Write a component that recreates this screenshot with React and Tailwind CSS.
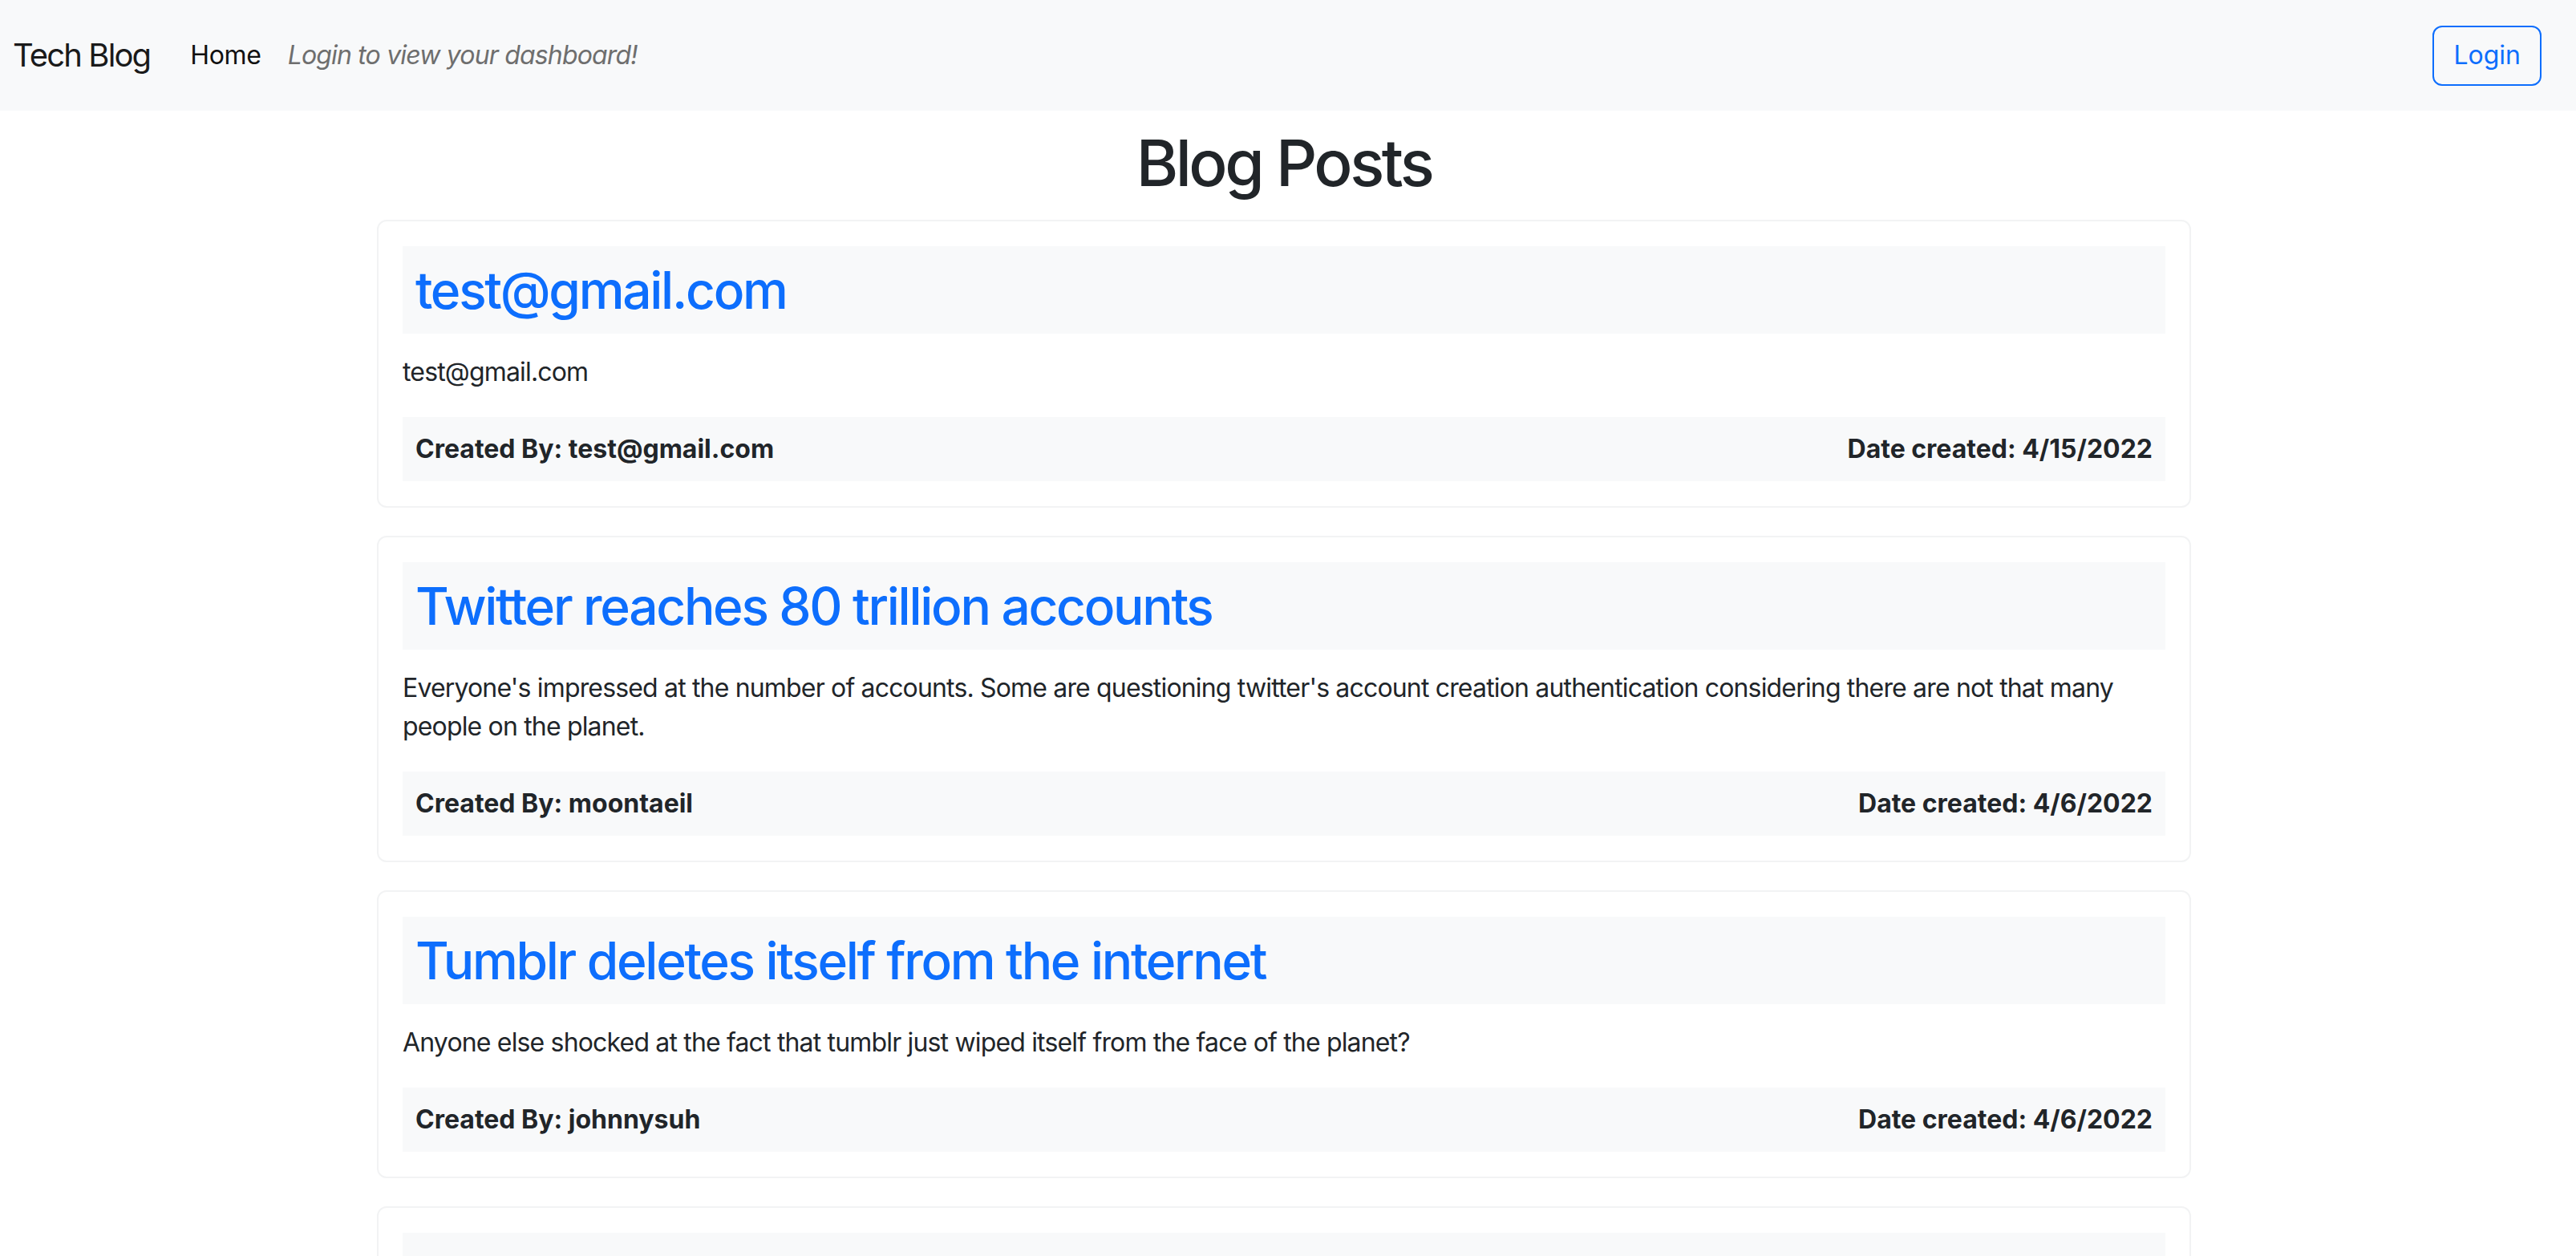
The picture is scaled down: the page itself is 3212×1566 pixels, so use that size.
import React from "react";

const posts = [
  {
    title: "test@gmail.com",
    body: "test@gmail.com",
    author: "test@gmail.com",
    date: "4/15/2022",
  },
  {
    title: "Twitter reaches 80 trillion accounts",
    body: "Everyone's impressed at the number of accounts. Some are questioning twitter's account creation authentication considering there are not that many people on the planet.",
    author: "moontaeil",
    date: "4/6/2022",
  },
  {
    title: "Tumblr deletes itself from the internet",
    body: "Anyone else shocked at the fact that tumblr just wiped itself from the face of the planet?",
    author: "johnnysuh",
    date: "4/6/2022",
  },
  {
    title: "Google announces a new search engine",
    body: "Search has never been easier.",
    author: "moontaeil",
    date: "4/6/2022",
  },
];

function PostCard({ post }) {
  return (
    <div className="border-2 border-[#f2f3f4] rounded-[12px] px-[30px] py-[31px] bg-white">
      <div className="bg-[#f8f9fa] px-4 py-4">
        <h2 className="text-[64px] leading-[77px] font-medium tracking-[-0.036em] text-[#0d6efd]">
          {post.title}
        </h2>
      </div>
      <p className="mt-[24px] text-[32px] leading-[48px] tracking-[-0.026em] text-[#212529]">
        {post.body}
      </p>
      <div className="mt-[32px] bg-[#f8f9fa] px-4 py-4 flex justify-between text-[32px] leading-[48px] font-bold text-[#212529]">
        <span>Created By: {post.author}</span>
        <span>Date created: {post.date}</span>
      </div>
    </div>
  );
}

export default function App() {
  return (
    <div
      className="min-h-screen bg-white"
      style={{ fontFamily: "Inter, 'Noto Sans', 'Liberation Sans', sans-serif" }}
    >
      <nav className="h-[138px] bg-[#f8f9fa] flex items-center pl-[16px] pr-[43px]">
        <span className="text-[40px] leading-[60px] tracking-[-0.047em] text-[#1a1a1a]">
          Tech Blog
        </span>
        <span className="ml-[50px] text-[32px] leading-[48px] tracking-[-0.01em] text-[#111]">
          Home
        </span>
        <span className="ml-[33px] text-[32px] leading-[48px] italic tracking-[-0.026em] text-[#6e6e6e]">
          Login to view your dashboard!
        </span>
        <div className="flex-1" />
        <button className="h-[75px] px-[24px] border-2 border-[#0d6efd] rounded-[12px] text-[32px] leading-[48px] text-[#0d6efd] bg-transparent">
          Login
        </button>
      </nav>
      <div className="pr-[10px]">
        <h1 className="mt-[17px] mb-[23px] text-center text-[80px] leading-[96px] font-medium tracking-[-0.044em] text-[#212529]">
          Blog Posts
        </h1>
        <div className="w-[2262px] mx-auto flex flex-col gap-[35px] pb-[40px]">
          {posts.map((p, i) => (
            <PostCard key={i} post={p} />
          ))}
        </div>
      </div>
    </div>
  );
}
